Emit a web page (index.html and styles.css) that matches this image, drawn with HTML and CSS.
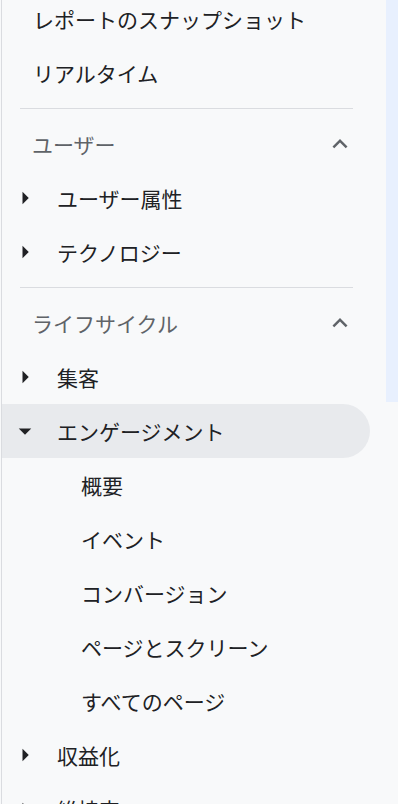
FILE: index.html
```html
<!DOCTYPE html>
<html lang="ja">
<head>
    <meta charset="UTF-8">
    <meta name="viewport" content="width=device-width, initial-scale=1.0">
    <title>レポート ナビゲーション</title>
    <link rel="stylesheet" href="styles.css">
</head>
<body>
<div class="page">
    <nav class="sidebar">
        <ul class="nav_list">
            <li class="nav_item top">レポートのスナップショット</li>
            <li class="nav_item top">リアルタイム</li>
        </ul>
        <div class="divider"></div>
        <div class="section_head">
            <span>ユーザー</span>
            <svg class="chevron" viewBox="0 0 24 24"><path d="M12 8l-6 6 1.41 1.41L12 10.83l4.59 4.58L18 14z"/></svg>
        </div>
        <ul class="nav_list">
            <li class="nav_item">
                <svg class="caret" viewBox="0 0 24 24"><path d="M10 17l5-5-5-5v10z"/></svg>
                <span>ユーザー属性</span>
            </li>
            <li class="nav_item">
                <svg class="caret" viewBox="0 0 24 24"><path d="M10 17l5-5-5-5v10z"/></svg>
                <span>テクノロジー</span>
            </li>
        </ul>
        <div class="divider"></div>
        <div class="section_head">
            <span>ライフサイクル</span>
            <svg class="chevron" viewBox="0 0 24 24"><path d="M12 8l-6 6 1.41 1.41L12 10.83l4.59 4.58L18 14z"/></svg>
        </div>
        <ul class="nav_list">
            <li class="nav_item">
                <svg class="caret" viewBox="0 0 24 24"><path d="M10 17l5-5-5-5v10z"/></svg>
                <span>集客</span>
            </li>
            <li class="nav_item open">
                <svg class="caret" viewBox="0 0 24 24"><path d="M7 10l5 5 5-5z"/></svg>
                <span>エンゲージメント</span>
            </li>
            <li class="nav_item sub">概要</li>
            <li class="nav_item sub">イベント</li>
            <li class="nav_item sub">コンバージョン</li>
            <li class="nav_item sub">ページとスクリーン</li>
            <li class="nav_item sub">すべてのページ</li>
            <li class="nav_item">
                <svg class="caret" viewBox="0 0 24 24"><path d="M10 17l5-5-5-5v10z"/></svg>
                <span>収益化</span>
            </li>
            <li class="nav_item">
                <svg class="caret" viewBox="0 0 24 24"><path d="M10 17l5-5-5-5v10z"/></svg>
                <span>維持率</span>
            </li>
        </ul>
    </nav>
    <div class="scroll_strip"></div>
</div>
</body>
</html>
```

FILE: styles.css
```css
html, body {
    margin: 0;
    height: 804px;
    overflow: hidden;
}

body {
    background: #f8f9fa;
    font-family: "Noto Sans CJK JP", "Noto Sans", sans-serif;
    color: #202124;
}

.page {
    display: flex;
    align-items: flex-start;
}

.sidebar {
    width: 384px;
    margin-left: 1px;
    border-left: 1px solid #dadce0;
    min-height: 804px;
    padding-top: 0;
    margin-top: -8px; /* list is scrolled a little */
}

.scroll_strip {
    width: 12px;
    height: 402px;
    background: #e8f0fe;
}

.nav_list {
    list-style: none;
    margin: 0;
    padding: 0;
}

.nav_item {
    height: 54px;
    display: flex;
    align-items: center;
    font-size: 21px;
    line-height: 28px;
    padding-left: 8px;
    white-space: nowrap;
}

.nav_item.top {
    padding-left: 31px;
}

.nav_item.sub {
    padding-left: 79px;
}

.nav_item.open {
    width: 360px;
    background: #e8eaed;
    border-radius: 0 27px 27px 0;
}

.caret {
    width: 30px;
    height: 30px;
    fill: #202124;
    margin-right: 17px;
    flex-shrink: 0;
}

.divider {
    height: 1px;
    background: #dadce0;
    margin: 8px 0 8px 18px;
    width: 333px;
}

.section_head {
    height: 54px;
    display: flex;
    align-items: center;
    justify-content: space-between;
    padding-left: 30px;
    padding-right: 31px;
    font-size: 21px;
    line-height: 28px;
    color: #5f6368;
}

.chevron {
    width: 30px;
    height: 30px;
    fill: #5f6368;
}
```
